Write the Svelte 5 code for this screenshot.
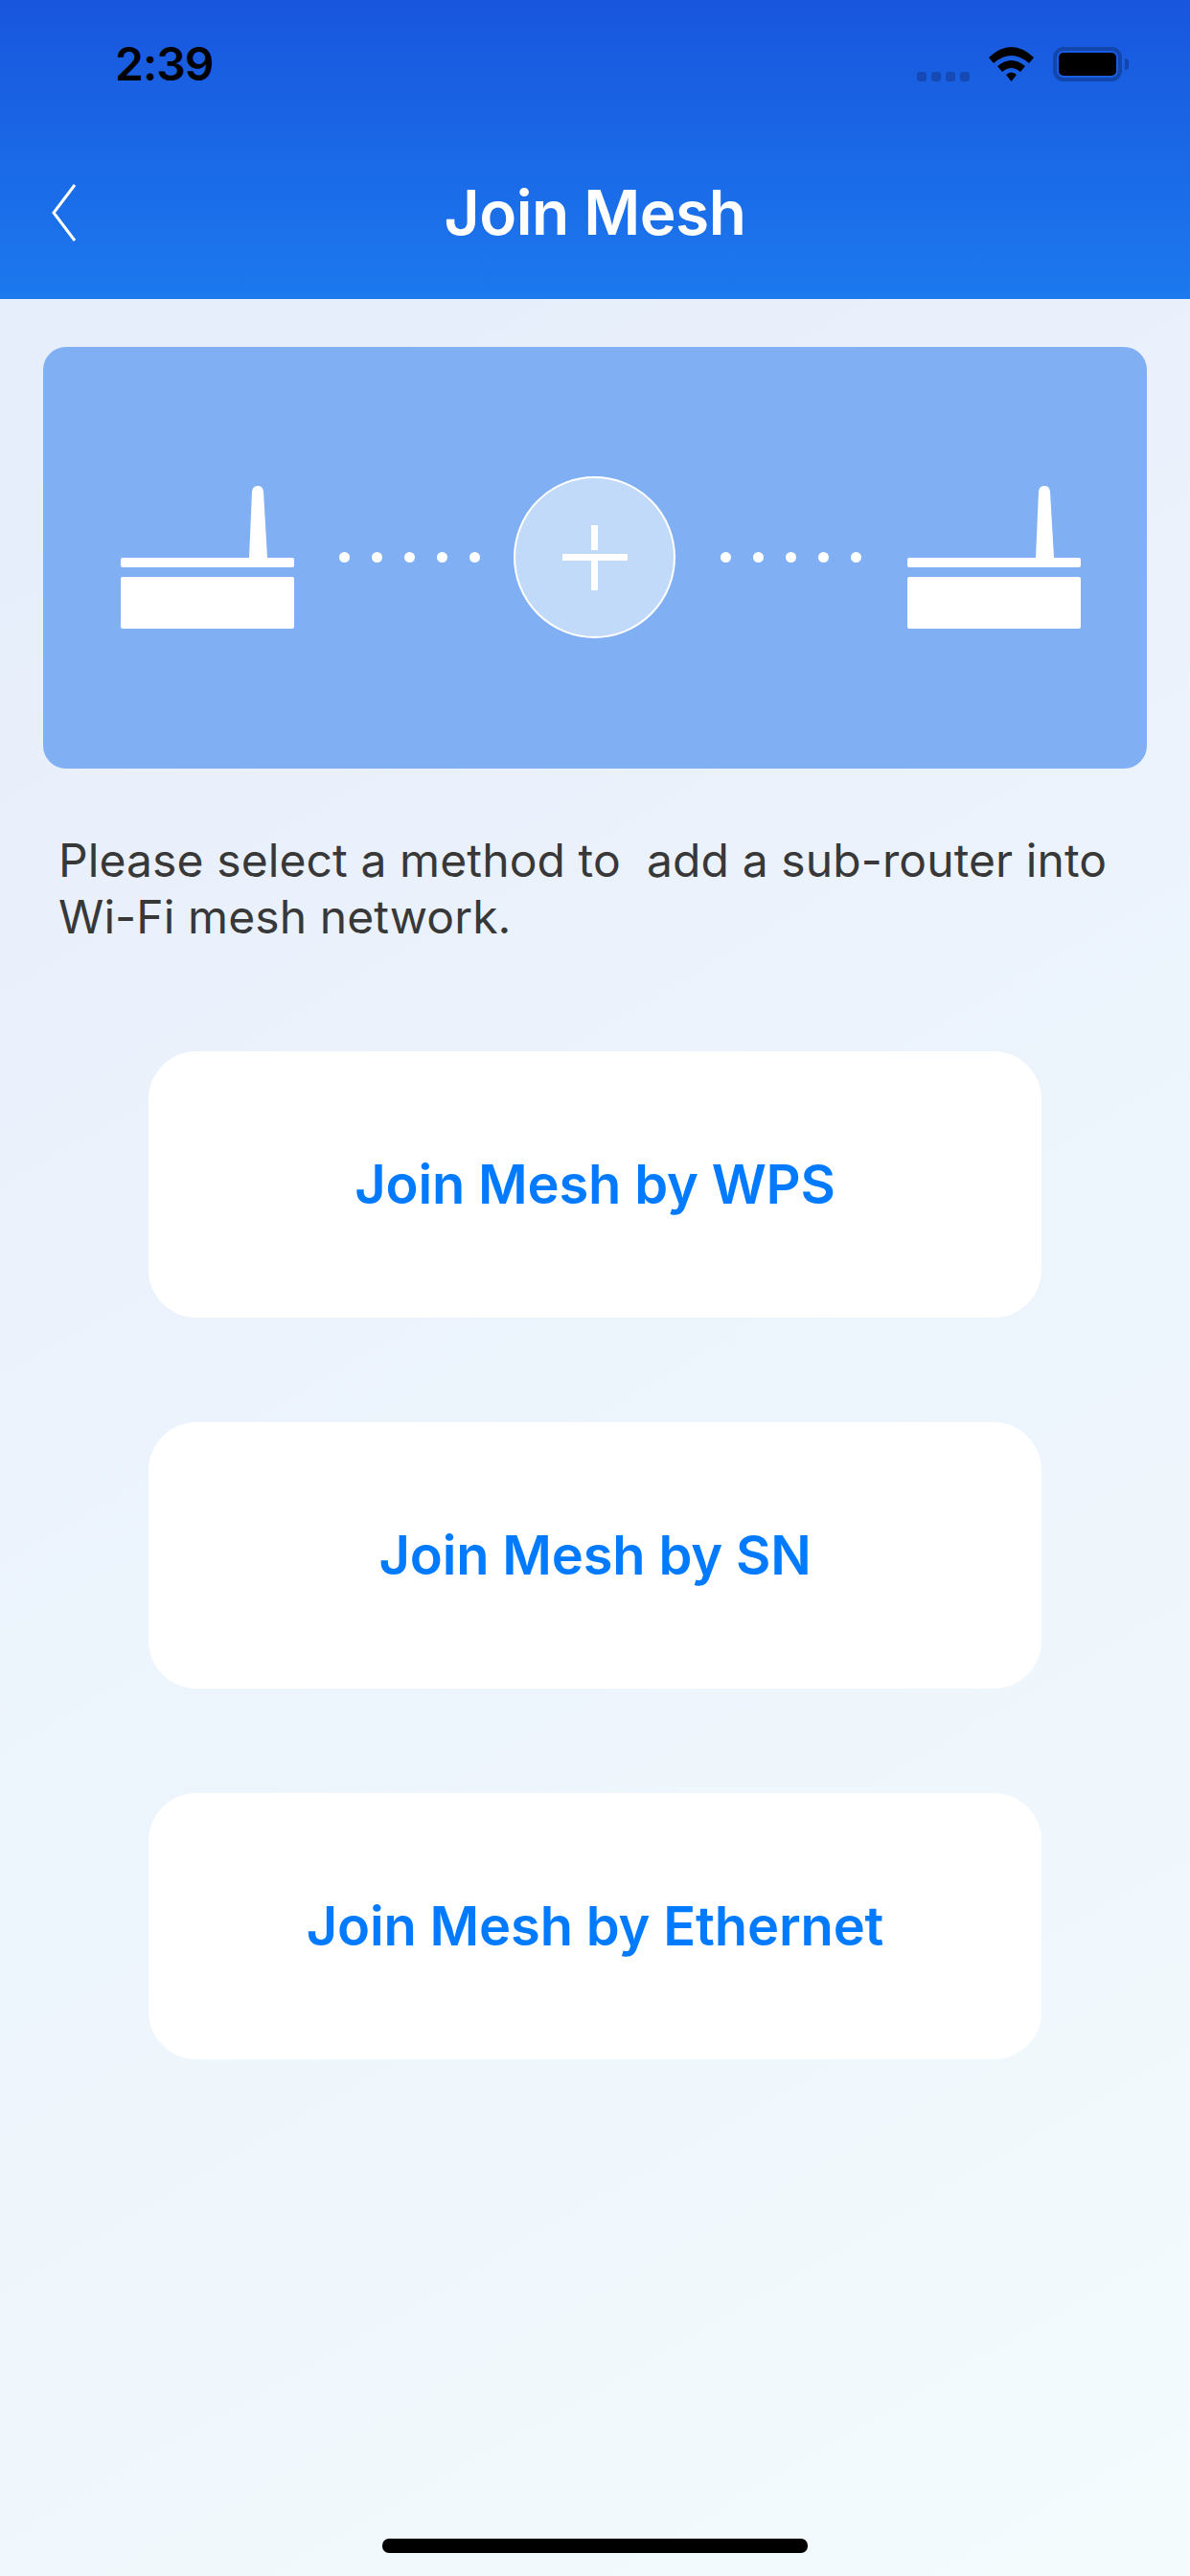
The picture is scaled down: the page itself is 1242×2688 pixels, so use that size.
<script>
    const methods = ['Join Mesh by WPS', 'Join Mesh by SN', 'Join Mesh by Ethernet']
    const dots = [0, 1, 2, 3, 4]
</script>

{#snippet router()}
    <svg class="router" width="181" height="149" viewBox="0 0 181 149">
        <path d="M134 75 L137 6 Q137.500 0 143 0 Q148.500 0 149 6 L153 75 Z" fill="#fff"/>
        <rect x="0" y="75" width="181" height="10" rx="2" fill="#fff"/>
        <rect x="0" y="95" width="181" height="54" rx="2" fill="#fff"/>
    </svg>
{/snippet}

{#snippet link()}
    <div class="dots">
        {#each dots as d}
            <span class="dot"></span>
        {/each}
    </div>
{/snippet}

<div class="page">
    <header class="top">
        <div class="status">
            <span class="time">2:39</span>
            <div class="status-icons">
                <div class="signal">
                    <span></span><span></span><span></span><span></span>
                </div>
                <svg width="47" height="36" viewBox="0 0 47 36">
                    <path d="M0 11 Q23.500 -11 47 11 L42 17 Q23.500 1 5 17 Z" fill="#000"/>
                    <path d="M9 20 Q23.500 8 38 20 L33 26 Q23.500 18 14 26 Z" fill="#000"/>
                    <path d="M18 29 Q23.500 24 29 29 L23.500 36 Z" fill="#000"/>
                </svg>
                <div class="battery">
                    <div class="battery-body"><div class="battery-fill"></div></div>
                    <span class="battery-tip"></span>
                </div>
            </div>
        </div>
        <div class="nav">
            <svg class="back" width="28" height="62" viewBox="0 0 28 62">
                <path d="M25 2 L3 31 L25 60" fill="none" stroke="#fff" stroke-width="3"/>
            </svg>
            <h1>Join Mesh</h1>
        </div>
    </header>

    <main>
        <section class="banner">
            {@render router()}
            {@render link()}
            <div class="plus">
                <svg width="68" height="68" viewBox="0 0 68 68">
                    <rect x="30" y="0" width="7" height="26" fill="#fff"/>
                    <rect x="0" y="30" width="68" height="7" fill="#fff"/>
                    <rect x="30" y="37" width="7" height="31" fill="#fff"/>
                </svg>
            </div>
            {@render link()}
            <div class="router-end">
                {@render router()}
            </div>
        </section>

        <p class="intro">Please select a method to&nbsp; add a sub-router into Wi-Fi mesh network.</p>

        <div class="methods">
            {#each methods as m}
                <button class="method">{m}</button>
            {/each}
        </div>
    </main>

    <div class="home"></div>
</div>

<style>
:global(body) {
    margin: 0;
}

.page {
    width: 1242px;
    height: 2688px;
    display: flex;
    flex-direction: column;
    font-family: Inter, "Liberation Sans", sans-serif;
    background: linear-gradient(150deg, #e5ecfb 0%, #f3fbfd 100%);
}

.top {
    height: 312px;
    box-sizing: border-box;
    background: linear-gradient(180deg, #1856de 0%, #1c79ee 100%);
}

.status {
    height: 136px;
    box-sizing: border-box;
    padding: 40px 64px 0 120px;
    display: flex;
    justify-content: space-between;
    align-items: flex-start;
}

.time {
    font-size: 48px;
    font-weight: 600;
    line-height: 54px;
    color: #000;
    letter-spacing: -1px;
}

.status-icons {
    display: flex;
    align-items: flex-end;
    margin-top: 9px;
}

.signal {
    display: flex;
    gap: 5px;
    margin-right: 20px;
}

.signal span {
    width: 10px;
    height: 10px;
    border-radius: 3px;
    background: #1549b5;
}

.battery {
    display: flex;
    align-items: center;
    margin-left: 20px;
}

.battery-body {
    width: 72px;
    height: 36px;
    box-sizing: border-box;
    padding: 2px;
    border: 4px solid #1146ad;
    border-radius: 11px;
}

.battery-fill {
    height: 100%;
    background: #000;
    border-radius: 5px;
}

.battery-tip {
    width: 4px;
    height: 12px;
    margin-left: 3px;
    background: #1146ad;
    border-radius: 0 4px 4px 0;
}

.nav {
    position: relative;
    height: 176px;
    display: flex;
    justify-content: center;
}

.back {
    position: absolute;
    left: 53px;
    top: 55px;
}

h1 {
    margin: 50px 0 0;
    font-size: 64px;
    line-height: 72px;
    font-weight: 600;
    color: #fff;
    letter-spacing: -0.5px;
}

main {
    flex: 1;
    padding: 50px 45px 0;
}

.banner {
    height: 440px;
    box-sizing: border-box;
    padding: 145px 0 0 81px;
    display: flex;
    align-items: flex-start;
    border-radius: 24px;
    background: #80b0f3;
}

.dots {
    display: flex;
    gap: 23px;
    margin: 69px 0 0 47px;
}

.dot {
    width: 11px;
    height: 11px;
    border-radius: 50%;
    background: #fff;
}

.plus {
    width: 169px;
    height: 169px;
    box-sizing: border-box;
    margin: -10px 0 0 35px;
    display: flex;
    align-items: center;
    justify-content: center;
    border: 2px solid #fff;
    border-radius: 50%;
    background: #c2daf9;
}

.router-end {
    margin-left: 48px;
}

.intro {
    margin: 66px 16px 0;
    font-size: 48px;
    line-height: 59px;
    color: #383838;
    font-weight: 400;
    letter-spacing: 0.1px;
}

.methods {
    margin-top: 111px;
    display: flex;
    flex-direction: column;
    align-items: center;
    gap: 109px;
}

.method {
    width: 932px;
    height: 278px;
    border: 0;
    border-radius: 50px;
    background: #fff;
    color: #007aff;
    font-family: inherit;
    font-size: 56px;
    font-weight: 600;
    letter-spacing: -0.15px;
}

.home {
    width: 444px;
    height: 15px;
    margin: 0 auto 24px;
    border-radius: 7px;
    background: #000;
}
</style>
